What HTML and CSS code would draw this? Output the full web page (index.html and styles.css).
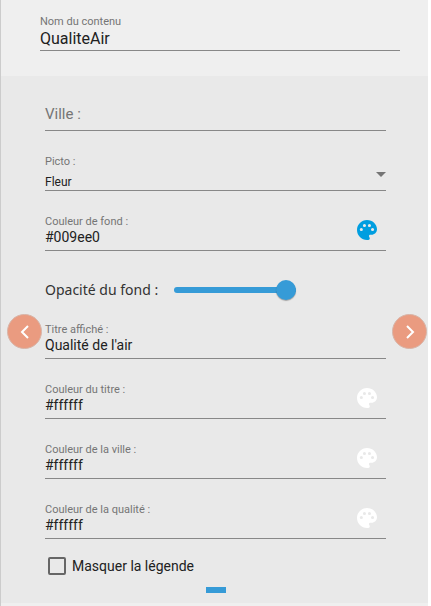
FILE: index.html
```html
<!DOCTYPE html>
<html lang="fr">
<head>
    <meta charset="UTF-8">
    <meta name="viewport" content="width=device-width, initial-scale=1.0">
    <title>QualiteAir</title>
    <link rel="stylesheet" href="styles.css">
</head>
<body>
<svg width="0" height="0" class="sprite">
    <symbol id="palette" viewBox="3 3 18 18">
        <path fill-rule="evenodd" d="M12 3c-4.97 0-9 4.03-9 9s4.03 9 9 9h1.2c.83 0 1.3-.67 1.3-1.5 0-.39-.15-.74-.39-1.01-.23-.26-.38-.61-.38-.99 0-.83.67-1.2 1.5-1.2H16c2.76 0 5-2.24 5-5C21 6.880 16.970 3 12 3zM5.500 11.500a1.400 1.400 0 1 0 2.800 0a1.400 1.400 0 1 0-2.800 0zM8.300 8a1.400 1.400 0 1 0 2.800 0a1.400 1.400 0 1 0-2.800 0zM12.800 8a1.400 1.400 0 1 0 2.800 0a1.400 1.400 0 1 0-2.800 0zM15.600 11.500a1.400 1.400 0 1 0 2.800 0a1.400 1.400 0 1 0-2.800 0z"/>
    </symbol>
</svg>

<div class="panel">
    <div class="panelHead">
        <div class="field">
            <label for="nom">Nom du contenu</label>
            <input type="text" id="nom" class="big" value="QualiteAir">
        </div>
    </div>

    <div class="slide">
        <div class="fields">
            <div class="field emptyField">
                <label for="ville">Ville :</label>
                <input type="text" id="ville">
            </div>

            <div class="field selectField">
                <label for="picto">Picto :</label>
                <select id="picto">
                    <option>Fleur</option>
                </select>
            </div>

            <div class="field colorField">
                <label for="fond">Couleur de fond :</label>
                <input type="text" id="fond" value="#009ee0">
                <button class="pickBtn blue" aria-label="Choisir"><svg><use href="#palette"/></svg></button>
            </div>

            <div class="rangeField">
                <label for="opacite">Opacité du fond :</label>
                <input type="range" id="opacite" min="0" max="100" value="100">
            </div>

            <div class="field">
                <label for="titre">Titre affiché :</label>
                <input type="text" id="titre" value="Qualité de l'air">
            </div>

            <div class="field colorField">
                <label for="ctitre">Couleur du titre :</label>
                <input type="text" id="ctitre" value="#ffffff">
                <button class="pickBtn" aria-label="Choisir"><svg><use href="#palette"/></svg></button>
            </div>

            <div class="field colorField">
                <label for="cville">Couleur de la ville :</label>
                <input type="text" id="cville" value="#ffffff">
                <button class="pickBtn" aria-label="Choisir"><svg><use href="#palette"/></svg></button>
            </div>

            <div class="field colorField">
                <label for="cqualite">Couleur de la qualité :</label>
                <input type="text" id="cqualite" value="#ffffff">
                <button class="pickBtn" aria-label="Choisir"><svg><use href="#palette"/></svg></button>
            </div>
        </div>

        <div class="checkField">
            <input type="checkbox" id="legende">
            <label for="legende">Masquer la légende</label>
        </div>

        <div class="indicator"></div>

        <!-- carousel arrows -->
        <button class="navBtn prevBtn" aria-label="Précédent">
            <svg viewBox="0 0 16 16"><path d="M11 2L5 8l6 6"/></svg>
        </button>
        <button class="navBtn nextBtn" aria-label="Suivant">
            <svg viewBox="0 0 16 16"><path d="M5 2l6 6-6 6"/></svg>
        </button>
    </div>
</div>
</body>
</html>
```
FILE: styles.css
```css
*{
    margin: 0;
    padding: 0;
    box-sizing: border-box;
}
body{
    background-color: #fff;
    font-family: Roboto, sans-serif;
    color: #212121;
}
.sprite{
    position: absolute;
}
.panel{
    min-height: 100vh;
    margin-right: 3px;
    border-left: 1px solid #ccc;
    background-color: #efefef;
}
.panelHead{
    padding: 13px 28px 25px 39px;
}
.slide{
    position: relative;
    padding: 17px 42px 10px 44px;
    background-color: #e9e9e9;
}
.fields{
    display: flex;
    flex-direction: column;
    gap: 22px;
}

/* fields */
.field{
    position: relative;
    display: grid;
    grid-template-columns: 1fr;
    grid-template-rows: 16px 16px;
    padding-bottom: 5px;
    border-bottom: 1px solid #888;
}
.field label{
    font-size: 11px;
    line-height: 18px;
    color: #757575;
}
.field input, .field select{
    width: 100%;
    border: none;
    outline: none;
    background: none;
    font-family: inherit;
    font-size: 14px;
    line-height: 16px;
    color: #212121;
}
.field .big{
    height: 18px;
    font-size: 16px;
}
.emptyField label{
    position: absolute;
    left: 0;
    top: 12px;
    font-size: 15px;
}
.emptyField input{
    grid-row: 2;
}
.selectField{
    grid-template-rows: 16px 21px;
    padding-bottom: 0;
}
.selectField select{
    appearance: none;
    padding-top: 4px;
    font-size: 12px;
}
.selectField::after{
    content: "";
    position: absolute;
    right: 0;
    top: 19px;
    border: 5px solid transparent;
    border-top-color: #757575;
    border-bottom: none;
}
.colorField{
    grid-template-columns: 1fr auto;
}
.pickBtn{
    grid-column: 2;
    grid-row: 1 / 3;
    align-self: center;
    height: 22px;
    margin-right: 9px;
    padding-top: 2px;
    border: none;
    background: none;
    color: #fff;
    cursor: pointer;
}
.pickBtn svg{
    display: block;
    width: 20px;
    height: 20px;
    fill: currentColor;
}
.blue{
    color: #009ee0;
}

/* slider */
.rangeField{
    display: flex;
    align-items: center;
    gap: 16px;
    height: 26px;
    padding-top: 8px;
}
.rangeField label{
    font-family: "Noto Sans", sans-serif;
    font-size: 14px;
    line-height: 20px;
    color: #333;
}
.rangeField input{
    appearance: none;
    width: 122px;
    height: 20px;
    background: none;
}
.rangeField input::-webkit-slider-runnable-track{
    height: 6px;
    border-radius: 3px;
    background-color: #369bd7;
}
.rangeField input::-webkit-slider-thumb{
    appearance: none;
    width: 20px;
    height: 20px;
    margin-top: -7px;
    border-radius: 50%;
    background-color: #369bd7;
    box-shadow: 0 1px 1px rgba(0,0,0,0.3);
}

.checkField{
    display: flex;
    align-items: center;
    gap: 6px;
    height: 18px;
    margin-top: 18px;
    padding-left: 3px;
}
.checkField input{
    appearance: none;
    width: 18px;
    height: 18px;
    border: 2px solid #666;
    border-radius: 2px;
}
.checkField input:checked{
    background-color: #369bd7;
}
.checkField label{
    font-size: 14px;
    line-height: 16px;
}
.indicator{
    width: 20px;
    height: 6px;
    margin: 12px auto 0;
    background-color: #369bd7;
}

.navBtn{
    position: absolute;
    top: 238px;
    display: flex;
    align-items: center;
    justify-content: center;
    width: 35px;
    height: 35px;
    border: 1px solid #d8b5a8;
    border-radius: 50%;
    background-color: #ea9b80;
    cursor: pointer;
}
.navBtn svg{
    width: 16px;
    height: 16px;
    fill: none;
    stroke: #fff;
    stroke-width: 2;
}
.prevBtn{
    left: 6px;
}
.nextBtn{
    right: 1px;
}
```
